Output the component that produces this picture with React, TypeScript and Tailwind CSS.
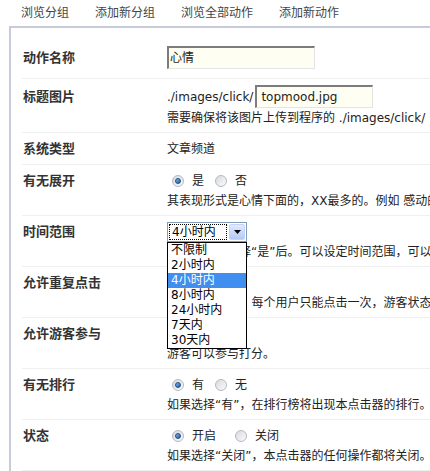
const navItems = ["浏览分组", "添加新分组", "浏览全部动作", "添加新动作"];
const timeOptions = ["不限制", "2小时内", "4小时内", "8小时内", "24小时内", "7天内", "30天内"];

function Radio({ checked }: { checked?: boolean }) {
  return (
    <span className="flex h-[12px] w-[12px] shrink-0 items-center justify-center rounded-full border border-[#b4b9c2] bg-gradient-to-br from-[#d8dadf] to-[#fbfbfb]">
      {checked && (
        <span className="h-[6px] w-[6px] rounded-full border border-[#1f4c80] bg-gradient-to-br from-[#7cb6ec] to-[#1c5fa8]" />
      )}
    </span>
  );
}

// radio line; hidden ones sit under the open dropdown
function RadioLine({ options, gaps, hidden }: { options: string[]; gaps: number[]; hidden?: boolean }) {
  return (
    <div className={`flex h-5 items-center pl-[5px] ${hidden ? "invisible" : ""}`}>
      {options.map((o, i) => (
        <div key={o} className="flex items-center" style={{ marginLeft: gaps[i] }}>
          <Radio checked={i === 0} />
          <span className="ml-[8px]">{o}</span>
        </div>
      ))}
    </div>
  );
}

function Row({ label, labelLead = "leading-5", pb = "pb-[4px]", children }: { label: string; labelLead?: string; pb?: string; children: React.ReactNode }) {
  return (
    <div className={`flex border-b border-[#efefef] pt-[6px] ${pb}`}>
      <div className={`w-[145px] shrink-0 pl-[1px] text-[13px] font-bold text-[#333] ${labelLead}`}>{label}</div>
      <div className="min-w-0 flex-1 overflow-hidden whitespace-nowrap leading-5 text-[#222]">{children}</div>
    </div>
  );
}

export default function App() {
  return (
    <div className="h-[471px] w-[430px] overflow-hidden bg-white font-['DejaVu_Sans','Noto_Sans_CJK_SC',sans-serif] text-[12px]">
      <div className="flex h-[26px] items-center pl-[8px] text-[#444]">
        {navItems.map((n) => (
          <span key={n} className="px-[13px]">{n}</span>
        ))}
      </div>
      <div className="relative ml-[9px] w-[440px] border-l-2 border-t-2 border-[#c6ccd9] pl-[11px] pt-[12px]">
        <Row label="动作名称" labelLead="leading-[23px]" pb="pb-[9px]">
          <div className="flex h-[23px] w-[148px] items-center border border-b-[#e4e4e4] border-l-2 border-l-[#7c7c7c] border-r-[#e4e4e4] border-t-2 border-t-[#7c7c7c] bg-[#fefef2] pl-[1px]">
            心情
          </div>
        </Row>
        <Row label="标题图片" labelLead="leading-[23px]">
          <div className="flex h-[23px] items-center gap-[2px]">
            <span>./images/click/</span>
            <div className="flex h-[23px] w-[118px] items-center border border-b-[#e4e4e4] border-l-2 border-l-[#7c7c7c] border-r-[#e4e4e4] border-t-2 border-t-[#7c7c7c] bg-[#fefef2] pl-[4px]">
              topmood.jpg
            </div>
          </div>
          <div>需要确保将该图片上传到程序的 ./images/click/</div>
        </Row>
        <Row label="系统类型" pb="pb-[5px]">
          <div>文章频道</div>
        </Row>
        <Row label="有无展开">
          <RadioLine options={["是", "否"]} gaps={[0, 11]} />
          <div>其表现形式是心情下面的，XX最多的。例如 感动的人数最多</div>
        </Row>
        <div className="relative">
          <Row label="时间范围">
            <div className="flex h-[20px] w-[80px] border border-[#7f9db9] bg-white">
              <div className="m-[1px] flex flex-1 items-center border border-dotted border-black pl-[2px] leading-none text-black">
                4小时内
              </div>
              <div className="m-[1px] flex w-[16px] items-center justify-center rounded-[2px] border border-[#c3d3fd] bg-gradient-to-b from-[#e2ebfe] to-[#b4c8f5]">
                <svg width="7" height="4" viewBox="0 0 7 4">
                  <path d="M0 0h7L3.5 4z" fill="#000" />
                </svg>
              </div>
            </div>
            <div>
              <span className="invisible">在有无展开选</span>择“是”后。可以设定时间范围，可以
            </div>
          </Row>
          <div className="absolute left-[145px] top-[26px] z-10 w-[80px] border border-black bg-white">
            {timeOptions.map((o) => (
              <div
                key={o}
                className={`h-[15px] pl-[3px] leading-[15px] ${o === "4小时内" ? "bg-[#3f8ef0] text-white" : "text-black"}`}
              >
                {o}
              </div>
            ))}
          </div>
        </div>
        <Row label="允许重复点击">
          <RadioLine options={["是", "否"]} gaps={[0, 11]} hidden />
          <div>
            <span className="invisible">如果选择“是”，</span>每个用户只能点击一次，游客状态下
          </div>
        </Row>
        <Row label="允许游客参与">
          <RadioLine options={["是", "否"]} gaps={[0, 11]} hidden />
          <div>游客可以参与打分。</div>
        </Row>
        <Row label="有无排行">
          <RadioLine options={["有", "无"]} gaps={[0, 11]} />
          <div>如果选择“有”，在排行榜将出现本点击器的排行。</div>
        </Row>
        <Row label="状态">
          <RadioLine options={["开启", "关闭"]} gaps={[0, 19]} />
          <div>如果选择“关闭”，本点击器的任何操作都将关闭。</div>
        </Row>
      </div>
    </div>
  );
}
